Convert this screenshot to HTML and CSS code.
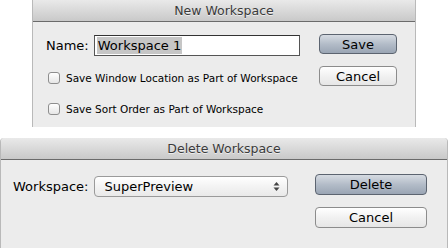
FILE: index.html
```html
<!DOCTYPE html>
<html lang="en">
<head>
  <meta charset="UTF-8" />
  <title>Workspaces</title>
  <link rel="stylesheet" href="styles.css">
</head>
<body>
  <div class="window window-new">
    <div class="titlebar">New Workspace</div>
    <div class="window-body">
      <div class="fields">
        <div class="name-row">
          <label for="ws-name">Name:</label>
          <div class="text-input" id="ws-name"><span class="selected">Workspace 1</span></div>
        </div>
        <label class="check"><span class="box"></span>Save Window Location as Part of Workspace</label>
        <label class="check"><span class="box"></span>Save Sort Order as Part of Workspace</label>
      </div>
      <div class="buttons">
        <button class="btn default">Save</button>
        <button class="btn">Cancel</button>
      </div>
    </div>
  </div>

  <div class="window window-delete">
    <div class="titlebar">Delete Workspace</div>
    <div class="window-body">
      <div class="fields">
        <div class="popup-row">
          <label>Workspace:</label>
          <div class="popup">
            <span>SuperPreview</span>
            <svg class="arrows" width="7" height="11" viewBox="0 0 7 11">
              <path d="M3.5 1 L6.5 4.5 L0.5 4.5 Z" fill="#444"/>
              <path d="M3.5 10 L6.5 6.5 L0.5 6.5 Z" fill="#444"/>
            </svg>
          </div>
        </div>
      </div>
      <div class="buttons">
        <button class="btn default">Delete</button>
        <button class="btn">Cancel</button>
      </div>
    </div>
  </div>
</body>
</html>
```

FILE: styles.css
```css
* {
  margin: 0;
  padding: 0;
  box-sizing: border-box;
  font-family: 'DejaVu Sans', 'Liberation Sans', sans-serif;
}

body {
  background-color: #fff;
  width: 448px;
  height: 248px;
  overflow: hidden;
  display: flex;
  flex-direction: column;
}

.window {
  background-color: #ececec;
  border-left: 1px solid #b9b9b9;
  border-right: 1px solid #b9b9b9;
}

.window-new {
  margin: 0 32px;
  height: 127px;
}

.window-delete {
  margin-top: 11px;
  height: 110px;
  border-radius: 4px 4px 0 0;
}

.titlebar {
  height: 22px;
  line-height: 21px;
  text-align: center;
  font-size: 12.5px;
  color: #3a3a3a;
  background: linear-gradient(#e9e9e9, #c9c9c9);
  border-bottom: 1px solid #6b6b6b;
  text-shadow: 0 1px 0 rgba(255, 255, 255, 0.6);
}

.window-delete .titlebar {
  border-radius: 4px 4px 0 0;
}

.window-body {
  display: flex;
  justify-content: space-between;
}

.window-new .window-body {
  padding: 13px 18px 0 13px;
}

.window-delete .window-body {
  padding: 16px 20px 0 12px;
}

.fields {
  display: flex;
  flex-direction: column;
}

.name-row,
.popup-row {
  display: flex;
  align-items: center;
  gap: 5px;
  font-size: 13px;
  color: #000;
}

.popup-row {
  gap: 6px;
}

.text-input {
  width: 206px;
  height: 21px;
  background: #fff;
  border: 1px solid #555;
  border-top-color: #333;
  padding: 1px 2px;
  font-size: 13px;
  line-height: 17px;
}

.selected {
  background: #c6c6c6;
  padding: 0 1px;
  display: inline-block;
}

.check {
  display: flex;
  align-items: center;
  gap: 6px;
  font-size: 10.5px;
  color: #000;
  margin-left: 2px;
}

.check:first-of-type {
  margin-top: 16px;
}

.check + .check {
  margin-top: 19px;
}

.box {
  width: 12px;
  height: 12px;
  border: 1px solid #8e8e8e;
  border-radius: 3px;
  background: linear-gradient(#fff, #e6e6e6);
}

.buttons {
  display: flex;
  flex-direction: column;
  gap: 12px;
}

.window-new .buttons {
  margin-top: -1px;
}

.window-delete .buttons {
  margin-top: -2px;
}

.btn {
  width: 78px;
  height: 20px;
  font-size: 13px;
  color: #000;
  border: 1px solid #8c8c8c;
  border-radius: 4px;
  background: linear-gradient(#ffffff, #f1f1f1 50%, #e6e6e6);
}

.window-delete .btn {
  width: 112px;
  height: 21px;
}

.btn.default {
  border-color: #5c6470;
  background: linear-gradient(#d6dbe2, #b3bcc8 50%, #9aa5b4);
}

.popup {
  width: 194px;
  height: 21px;
  display: flex;
  align-items: center;
  justify-content: space-between;
  padding: 0 7px 0 9px;
  border: 1px solid #9a9a9a;
  border-radius: 4px;
  background: linear-gradient(#ffffff, #f3f3f3 50%, #e9e9e9);
}
```
